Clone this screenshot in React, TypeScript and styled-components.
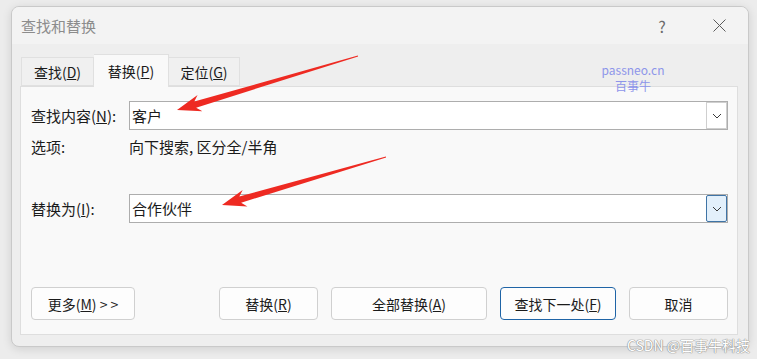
import styled, { createGlobalStyle } from 'styled-components';

const GlobalStyle = createGlobalStyle`
  html, body {
    margin: 0;
    padding: 0;
    background: #ececec;
  }
  body {
    font-family: "Noto Sans CJK SC", "Noto Sans", sans-serif;
    color: #1b1b1b;
  }
`;

const Page = styled.div`
  position: relative;
  width: 757px;
  height: 359px;
  padding: 6px 8px 12px 11px;
  box-sizing: border-box;
  overflow: hidden;
`;

const Window = styled.div`
  position: relative;
  width: 738px;
  height: 341px;
  box-sizing: border-box;
  display: flex;
  flex-direction: column;
  background: #eeeeee;
  border: 1px solid #c9c9c9;
  border-radius: 8px;
  box-shadow: 0 2px 10px rgba(0, 0, 0, 0.12);
  overflow: hidden;
`;

const TitleBar = styled.div`
  height: 37px;
  display: flex;
  align-items: center;
  padding: 0 0 0 9px;
  background: #f3f3f3;
`;

const Title = styled.div`
  flex: 1;
  font-size: 15px;
  line-height: 20px;
  color: #8c8c8c;
`;

const TitleButton = styled.div<{ w: number }>`
  width: ${({ w }) => w}px;
  height: 37px;
  display: flex;
  align-items: center;
  justify-content: center;
  color: #6a6a6a;
  font-size: 16px;
`;

const Body = styled.div`
  flex: 1;
  display: flex;
  flex-direction: column;
  padding: 10px 10px 11px 8px;
`;

const Tabs = styled.div`
  display: flex;
  align-items: flex-end;
  height: 32px;
  padding-left: 1px;
`;

const Tab = styled.div<{ w: number; active?: boolean }>`
  width: ${({ w }) => w}px;
  height: ${({ active }) => (active ? 33 : 29)}px;
  margin-bottom: ${({ active }) => (active ? -1 : 0)}px;
  box-sizing: border-box;
  display: flex;
  align-items: center;
  justify-content: center;
  font-size: 14px;
  color: #1b1b1b;
  background: ${({ active }) => (active ? '#f9f9f9' : '#f0f0f0')};
  border: 1px solid #e0e0e0;
  border-bottom: ${({ active }) => (active ? 'none' : '1px solid #e0e0e0')};
  position: relative;
  z-index: ${({ active }) => (active ? 2 : 1)};
  & + & {
    border-left: none;
  }
`;

const Panel = styled.div`
  flex: 1;
  display: flex;
  flex-direction: column;
  background: #f9f9f9;
  border: 1px solid #dedede;
  padding: 14px 9px 14px 10px;
`;

const FieldRow = styled.div<{ top?: number }>`
  display: grid;
  grid-template-columns: 98px 1fr;
  align-items: center;
  margin-top: ${({ top }) => top ?? 0}px;
`;

const Label = styled.div`
  font-size: 15px;
  line-height: 20px;
  color: #1b1b1b;
`;

const Combo = styled.div`
  height: 29px;
  box-sizing: border-box;
  display: flex;
  align-items: center;
  background: #ffffff;
  border: 1px solid #adadad;
  padding-left: 2px;
`;

const ComboText = styled.div`
  flex: 1;
  font-size: 15px;
  line-height: 20px;
`;

const DropButton = styled.div<{ hot?: boolean }>`
  width: 21px;
  height: 27px;
  box-sizing: border-box;
  display: flex;
  align-items: center;
  justify-content: center;
  background: ${({ hot }) => (hot ? '#e3f0fb' : '#ffffff')};
  border: 1px solid ${({ hot }) => (hot ? '#3f74a6' : '#cfcfcf')};
  border-radius: ${({ hot }) => (hot ? 2 : 0)}px;
`;

const OptionsRow = styled(FieldRow)`
  height: 20px;
`;

const Buttons = styled.div`
  margin-top: auto;
  display: flex;
  gap: 13px;
`;

const Spacer = styled.div`
  flex: 1;
`;

const Button = styled.div<{ w: number; primary?: boolean }>`
  width: ${({ w }) => w}px;
  height: 33px;
  box-sizing: border-box;
  display: flex;
  align-items: center;
  justify-content: center;
  font-size: 14px;
  color: #1b1b1b;
  background: #fdfdfd;
  border: 1px solid ${({ primary }) => (primary ? '#1f64a6' : '#d0d0d0')};
  border-radius: 4px;
`;

const Watermark = styled.div`
  position: absolute;
  left: 593px;
  top: 62px;
  width: 80px;
  display: flex;
  flex-direction: column;
  align-items: center;
  font-size: 12px;
  line-height: 16px;
  color: #8d95ea;
  z-index: 3;
`;

const Credit = styled.div`
  position: absolute;
  right: 7px;
  bottom: 5px;
  font-size: 14px;
  line-height: 18px;
  color: #ffffff;
  text-shadow: 0 0 1px #8a8a8a, 0 0 1px #8a8a8a, 0 0 1px #9a9a9a;
  z-index: 5;
`;

const Overlay = styled.svg`
  position: absolute;
  left: 0;
  top: 0;
  pointer-events: none;
  z-index: 4;
`;

const Chevron = () => (
  <svg width="10" height="6" viewBox="0 0 10 6">
    <path d="M1 1 L5 5 L9 1" fill="none" stroke="#3a3a3a" strokeWidth="1" />
  </svg>
);

// tapered red annotation arrow from tail to tip
const arrowPoints = (tx: number, ty: number, sx: number, sy: number) => {
  const dx = sx - tx;
  const dy = sy - ty;
  const len = Math.hypot(dx, dy);
  const ux = dx / len;
  const uy = dy / len;
  const nx = -uy;
  const ny = ux;
  const at = (d: number, w: number) => `${tx + ux * d + nx * w},${ty + uy * d + ny * w}`;
  return [
    `${tx},${ty}`,
    at(24, 8.5),
    at(19, 3.2),
    at(len, 0.4),
    at(len, -0.4),
    at(19, -3.2),
    at(24, -8.5),
  ].join(' ');
};

const App = () => {
  return (
    <>
      <GlobalStyle />
      <Page>
        <Window>
          <TitleBar>
            <Title>查找和替换</Title>
            <TitleButton w={56}>?</TitleButton>
            <TitleButton w={58}>
              <svg width="13" height="13" viewBox="0 0 13 13">
                <path d="M0.5 0.5 L12.5 12.5 M12.5 0.5 L0.5 12.5" stroke="#5a5a5a" strokeWidth="1" />
              </svg>
            </TitleButton>
          </TitleBar>
          <Body>
            <Tabs>
              <Tab w={73}>
                查找(<u>D</u>)
              </Tab>
              <Tab w={75} active>
                替换(<u>P</u>)
              </Tab>
              <Tab w={71}>
                定位(<u>G</u>)
              </Tab>
            </Tabs>
            <Panel>
              <FieldRow>
                <Label>
                  查找内容(<u>N</u>):
                </Label>
                <Combo>
                  <ComboText>客户</ComboText>
                  <DropButton>
                    <Chevron />
                  </DropButton>
                </Combo>
              </FieldRow>
              <OptionsRow top={7}>
                <Label>选项:</Label>
                <Label>向下搜索, 区分全/半角</Label>
              </OptionsRow>
              <FieldRow top={37}>
                <Label>
                  替换为(<u>I</u>):
                </Label>
                <Combo>
                  <ComboText>合作伙伴</ComboText>
                  <DropButton hot>
                    <Chevron />
                  </DropButton>
                </Combo>
              </FieldRow>
              <Buttons>
                <Button w={104}>
                  更多(<u>M</u>) &gt; &gt;
                </Button>
                <Spacer />
                <Button w={99}>
                  替换(<u>R</u>)
                </Button>
                <Button w={156}>
                  全部替换(<u>A</u>)
                </Button>
                <Button w={116} primary>
                  查找下一处(<u>F</u>)
                </Button>
                <Button w={99}>取消</Button>
              </Buttons>
            </Panel>
          </Body>
        </Window>
        <Watermark>
          <span>passneo.cn</span>
          <span>百事牛</span>
        </Watermark>
        <Overlay width="757" height="359" viewBox="0 0 757 359">
          <polygon points={arrowPoints(177, 110, 358, 56)} fill="#ee2a22" />
          <polygon points={arrowPoints(222, 205, 386, 157)} fill="#ee2a22" />
        </Overlay>
        <Credit>CSDN @百事牛科技</Credit>
      </Page>
    </>
  );
};

export default App;
